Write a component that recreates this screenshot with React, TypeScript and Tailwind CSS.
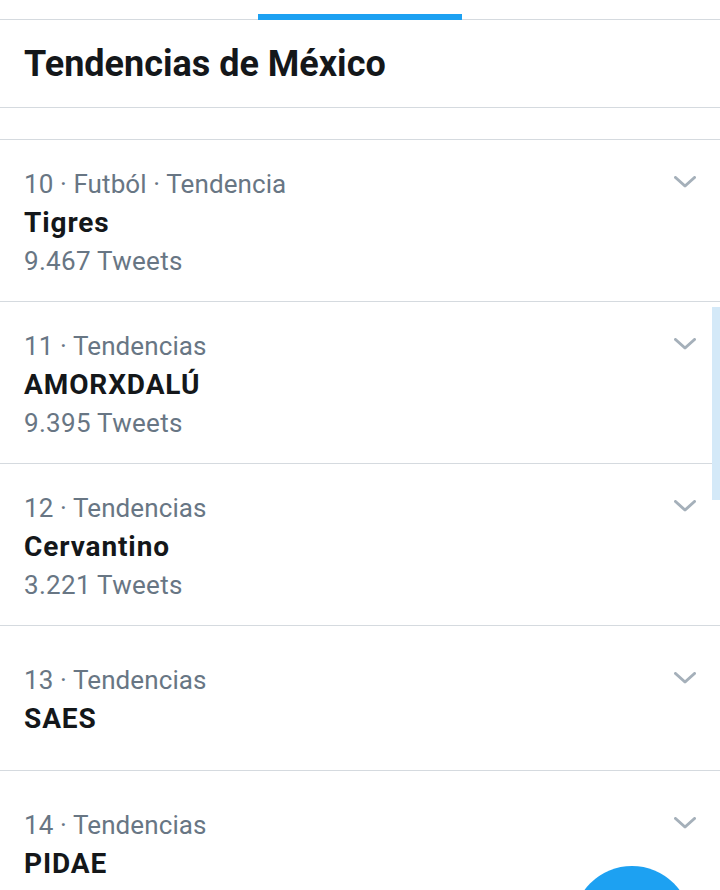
import React from 'react';

interface Trend {
  meta: string;
  name: string;
  tweets?: string;
}

const trends: Trend[] = [
  { meta: '10 · Futból · Tendencia', name: 'Tigres', tweets: '9.467 Tweets' },
  { meta: '11 · Tendencias', name: 'AMORXDALÚ', tweets: '9.395 Tweets' },
  { meta: '12 · Tendencias', name: 'Cervantino', tweets: '3.221 Tweets' },
  { meta: '13 · Tendencias', name: 'SAES' },
  { meta: '14 · Tendencias', name: 'PIDAE' },
];

function Chevron() {
  return (
    <svg width="22" height="12" viewBox="0 0 22 12">
      <path d="M1.5 1.5 L11 10 L20.5 1.5" fill="none" stroke="#a5b0ba" strokeWidth="3" strokeLinecap="round" strokeLinejoin="round" />
    </svg>
  );
}

function TrendRow({ trend }: { trend: Trend }) {
  return (
    <div
      className={`flex flex-col justify-center border-b border-[#d5dadf] pl-6 pr-6 pt-[3px] ${
        trend.tweets ? 'h-[162px]' : 'h-[145px]'
      }`}
    >
      <div className="flex items-center justify-between">
        <span className="text-[26px] leading-[38px] text-[#687684] tracking-[0.1px]">{trend.meta}</span>
        <div className="mb-[4px]">
          <Chevron />
        </div>
      </div>
      <span className="text-[28px] leading-[39px] font-bold text-[#14171a] tracking-[0.9px]">{trend.name}</span>
      {trend.tweets && (
        <span className="text-[26px] leading-[38px] text-[#687684] tracking-[0.3px]">{trend.tweets}</span>
      )}
    </div>
  );
}

export default function App() {
  return (
    <div className="relative w-[720px] h-[890px] overflow-hidden bg-white" style={{ fontFamily: 'Roboto, "Noto Sans", sans-serif' }}>
      <div className="h-5 border-b border-[#d5dadf] flex justify-center">
        <div className="w-[204px] h-[6px] mt-[14px] bg-[#1da1f2]" />
      </div>
      <div className="h-[88px] flex items-center px-6 border-b border-[#d5dadf]">
        <h1 className="text-[36px] font-bold text-[#14171a]">Tendencias de México</h1>
      </div>
      <div className="h-[32px] border-b border-[#d5dadf]" />
      {trends.map((t) => (
        <TrendRow key={t.name} trend={t} />
      ))}

      <div className="absolute right-0 top-[307px] w-2 h-[193px] bg-[#d4e9f8]" />
      <div className="absolute left-[573px] top-[866px] w-[118px] h-[118px] rounded-full bg-[#1da1f2]" />
    </div>
  );
}
